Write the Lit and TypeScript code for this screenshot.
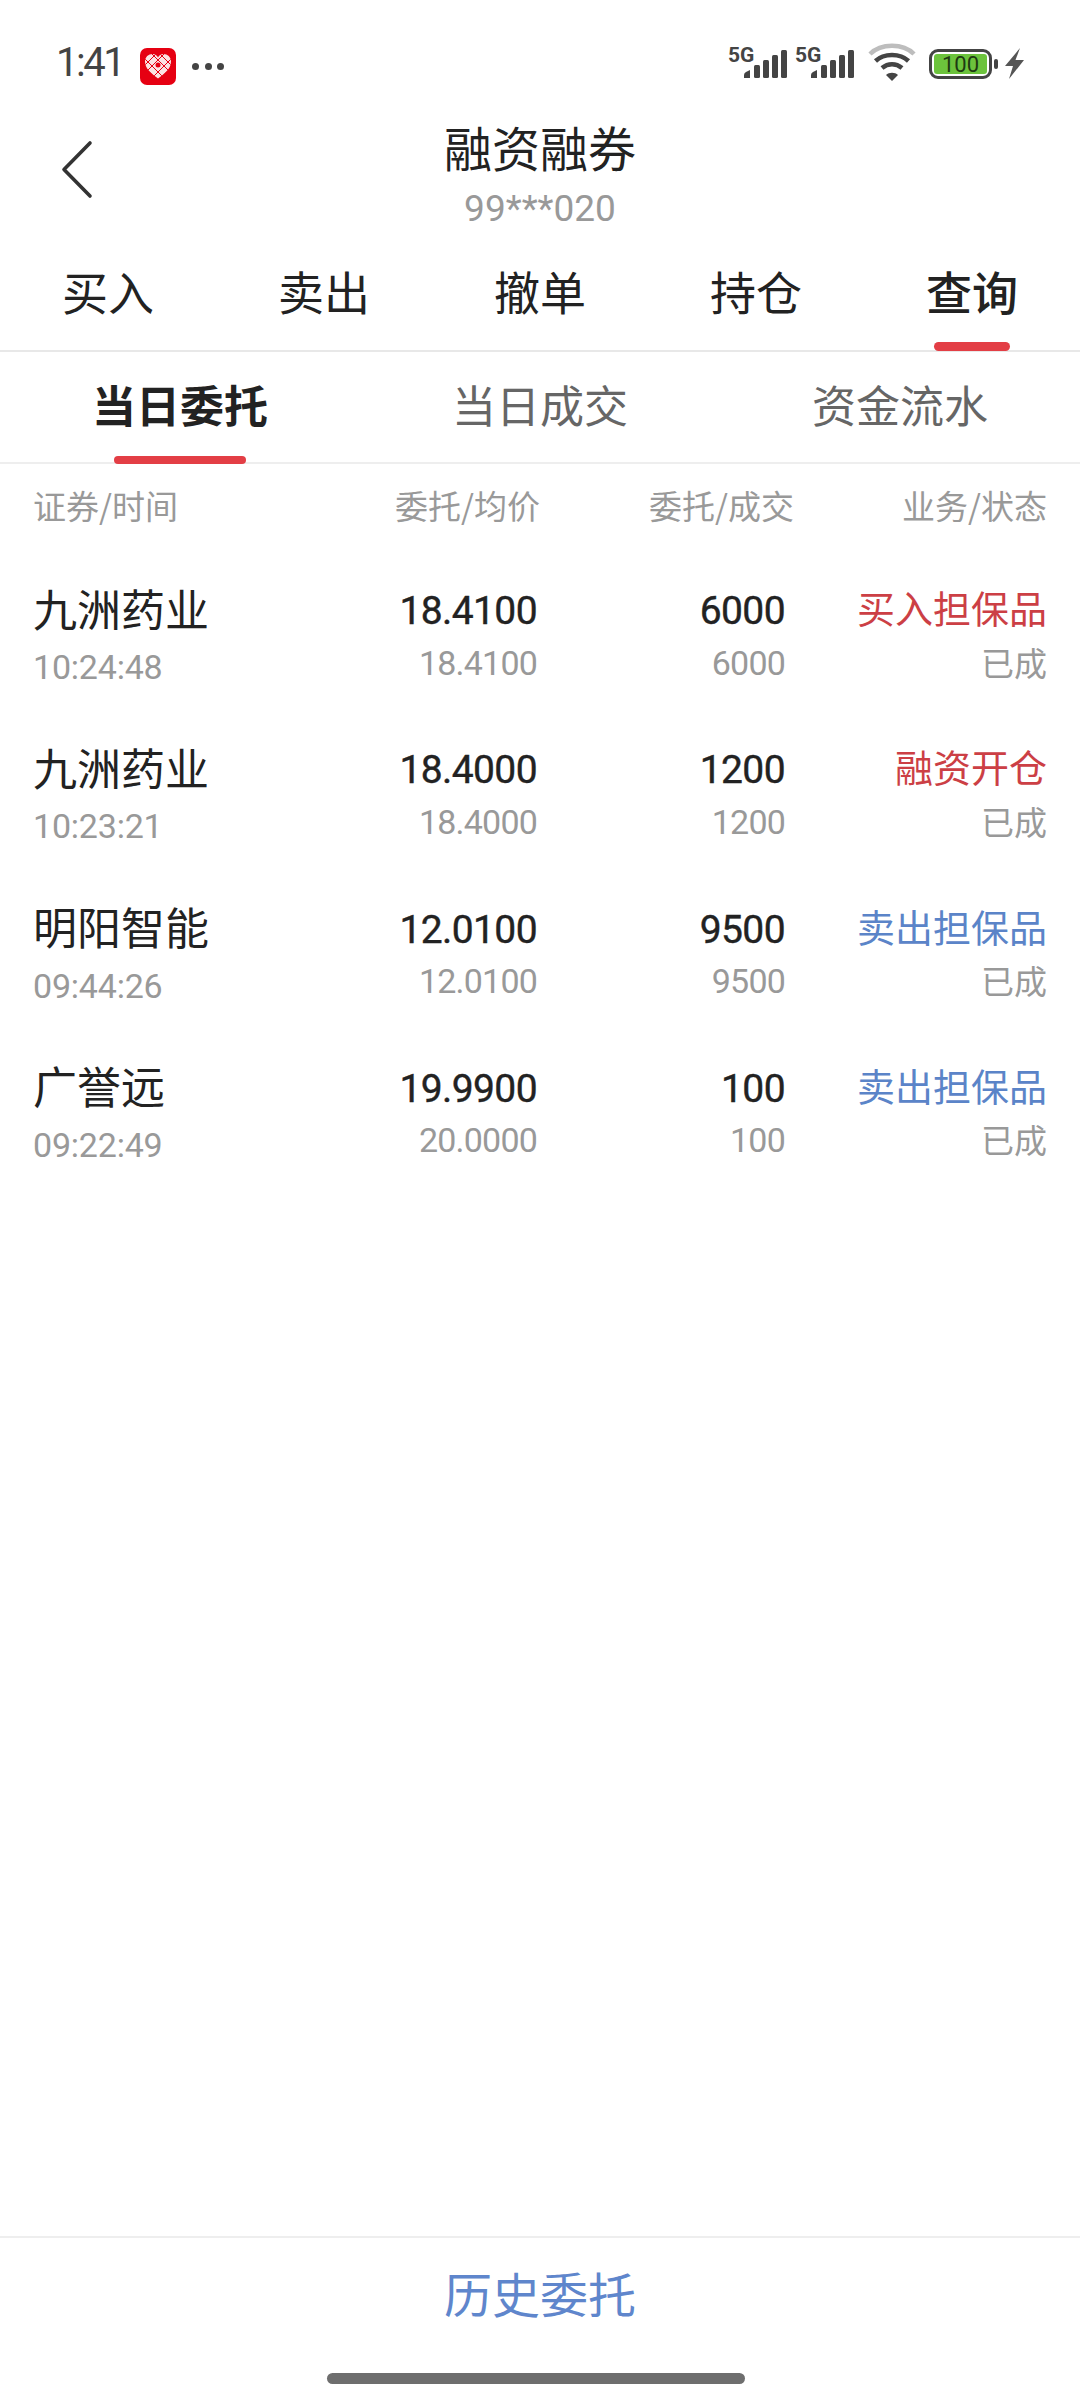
import { LitElement, html, css, svg } from "lit";
import { customElement } from "lit/decorators.js";

interface Order {
  name: string;
  time: string;
  price: string;
  avg: string;
  qty: string;
  filled: string;
  kind: string;
  tone: "buy" | "sell";
}

const ORDERS: Order[] = [
  { name: "九洲药业", time: "10:24:48", price: "18.4100", avg: "18.4100", qty: "6000", filled: "6000", kind: "买入担保品", tone: "buy" },
  { name: "九洲药业", time: "10:23:21", price: "18.4000", avg: "18.4000", qty: "1200", filled: "1200", kind: "融资开仓", tone: "buy" },
  { name: "明阳智能", time: "09:44:26", price: "12.0100", avg: "12.0100", qty: "9500", filled: "9500", kind: "卖出担保品", tone: "sell" },
  { name: "广誉远", time: "09:22:49", price: "19.9900", avg: "20.0000", qty: "100", filled: "100", kind: "卖出担保品", tone: "sell" },
];

const MAIN_TABS = ["买入", "卖出", "撤单", "持仓", "查询"];
const SUB_TABS = ["当日委托", "当日成交", "资金流水"];

// One cellular indicator: network label plus five rising bars.
const signal = (ox: number) => svg`
  <text x=${ox} y="22" class="net">5G</text>
  <path d="M${ox + 16} 38 v-3 q0 -2 2 -3 l4 -2 v8 z" />
  <rect x=${ox + 26} y="25" width="6" height="13" rx="1.5" />
  <rect x=${ox + 35} y="20" width="6" height="18" rx="1.5" />
  <rect x=${ox + 44} y="15" width="6" height="23" rx="1.5" />
  <rect x=${ox + 53} y="10" width="6" height="28" rx="1.5" />
`;

@customElement("app-root")
export class AppRoot extends LitElement {
  static styles = css`
    :host {
      display: block;
      width: 1080px;
      height: 2400px;
      background: #fff;
      font-family: "Noto Sans CJK SC", "Noto Sans", sans-serif;
      color: #222;
    }
    .page {
      height: 2400px;
      display: flex;
      flex-direction: column;
    }
    .status {
      height: 86px;
      flex: none;
      padding: 40px 48px 0 56px;
      box-sizing: border-box;
      display: flex;
      align-items: flex-start;
    }
    .status-left {
      display: flex;
      align-items: center;
      height: 46px;
    }
    .clock {
      font: 400 40px/46px Roboto, sans-serif;
      letter-spacing: -2.5px;
      color: #444;
      width: 66px;
    }
    .app-icon {
      width: 36px;
      height: 37px;
      margin: 6px 0 0 18px;
    }
    .dots {
      display: flex;
      gap: 5.5px;
      margin: 6px 0 0 16px;
    }
    .dots i {
      width: 7px;
      height: 7px;
      border-radius: 50%;
      background: #444;
    }
    .status-right {
      margin-left: auto;
      flex: none;
    }
    .net {
      font: 700 21px Roboto, sans-serif;
      fill: #444;
    }
    .nav {
      flex: none;
      height: 146px;
      position: relative;
      display: flex;
      flex-direction: column;
      align-items: center;
    }
    .back {
      position: absolute;
      left: 60px;
      top: 54px;
    }
    .title {
      font-size: 48px;
      line-height: 70px;
      margin-top: 25px;
      color: #222;
    }
    .account {
      font: 400 37px/46px Roboto, sans-serif;
      color: #999;
      margin-top: 4.5px;
    }
    .main-tabs {
      flex: none;
      height: 118px;
      display: grid;
      grid-template-columns: repeat(5, 1fr);
      border-bottom: 2px solid #e8e8e8;
    }
    .main-tab {
      position: relative;
      text-align: center;
      font-size: 46px;
      line-height: 64px;
      padding-top: 25.5px;
      color: #222;
    }
    .main-tab.on {
      font-weight: 500;
    }
    .main-tab.on::after {
      content: "";
      position: absolute;
      left: 50%;
      bottom: -1px;
      width: 76px;
      height: 9px;
      margin-left: -38px;
      border-radius: 5px;
      background: #e33e45;
    }
    .sub-tabs {
      flex: none;
      height: 110px;
      display: grid;
      grid-template-columns: repeat(3, 1fr);
      border-bottom: 2px solid #eee;
    }
    .sub-tab {
      position: relative;
      text-align: center;
      font-size: 44px;
      line-height: 64px;
      padding-top: 20px;
      color: #666;
    }
    .sub-tab.on {
      font-weight: 700;
      color: #222;
    }
    .sub-tab.on::after {
      content: "";
      position: absolute;
      left: 50%;
      bottom: -2px;
      width: 132px;
      height: 8px;
      margin-left: -66px;
      border-radius: 4px;
      background: #e33e45;
    }
    .head,
    .row {
      display: grid;
      padding: 0 33px 0 34px;
    }
    .head {
      flex: none;
      grid-template-columns: 200px 306px 254px 253px;
      height: 81px;
      align-items: center;
      font-size: 33px;
      color: #999;
    }
    .head span:first-child {
      margin-left: -1px;
    }
    .head span:nth-child(n + 2) {
      text-align: right;
    }
    .rows {
      flex: 1;
      padding-top: 36px;
    }
    .row {
      grid-template-columns: 200px 303px 248px 262px;
      height: 159.3px;
    }
    .col-r {
      text-align: right;
    }
    .first {
      margin-left: -1px;
    }
    .name {
      font-size: 44px;
      line-height: 60px;
      margin-top: -3.5px;
      color: #222;
    }
    .time {
      font: 400 34px/46px Roboto, sans-serif;
      letter-spacing: -0.2px;
      color: #999;
      margin-top: 6.5px;
    }
    .value {
      font: 400 39px/60px Roboto, sans-serif;
      letter-spacing: -0.6px;
      -webkit-text-stroke: 0.4px #222;
      color: #222;
    }
    .minor {
      font: 400 34px/46px Roboto, sans-serif;
      letter-spacing: -0.8px;
      color: #999;
      margin-top: -1.5px;
    }
    .kind {
      font-size: 38px;
      line-height: 60px;
      margin-top: -4px;
    }
    .kind.buy {
      color: #cc3f45;
    }
    .kind.sell {
      color: #5b84c8;
    }
    .state {
      font-size: 33px;
      line-height: 46px;
      color: #999;
      margin-top: 1.5px;
    }
    .foot {
      flex: none;
      height: 164px;
      border-top: 2px solid #eee;
      display: flex;
      flex-direction: column;
      align-items: center;
      box-sizing: border-box;
    }
    .history {
      font-size: 48px;
      line-height: 70px;
      color: #5f86cc;
      margin-top: 19px;
    }
    .home {
      width: 418px;
      height: 11px;
      border-radius: 6px;
      background: #6e6e6e;
      margin: 46px 9px 0 0;
    }
  `;

  private renderRow(o: Order) {
    return html`
      <div class="row">
        <div class="first">
          <div class="name">${o.name}</div>
          <div class="time">${o.time}</div>
        </div>
        <div class="col-r">
          <div class="value">${o.price}</div>
          <div class="minor">${o.avg}</div>
        </div>
        <div class="col-r">
          <div class="value">${o.qty}</div>
          <div class="minor">${o.filled}</div>
        </div>
        <div class="col-r">
          <div class="kind ${o.tone}">${o.kind}</div>
          <div class="state">已成</div>
        </div>
      </div>
    `;
  }

  render() {
    return html`
      <div class="page">
        <div class="status">
          <div class="status-left">
            <span class="clock">1:41</span>
            <svg class="app-icon" viewBox="0 0 36 37">
              <defs>
                <clipPath id="heart">
                  <path d="M18 30.500 C12 26 5 21 5 13.500 C5 9 8.500 6 12.500 6 C15 6 17 7.500 18 9.500 C19 7.500 21 6 23.500 6 C27.500 6 31 9 31 13.500 C31 21 24 26 18 30.500 Z" />
                </clipPath>
              </defs>
              <rect width="36" height="37" rx="7" fill="#e60012" />
              <g clip-path="url(#heart)">
                <rect width="36" height="37" fill="#fbe3e3" />
                <g stroke="#e60012" stroke-width="1" fill="none">
                  <path d="M0 6 L30 36 M0 14 L22 36 M6 0 L36 30 M14 0 L36 22 M36 6 L6 36 M36 14 L14 36 M30 0 L0 30 M22 0 L0 22" />
                </g>
                <circle cx="18" cy="17" r="2.500" fill="#e60012" />
              </g>
            </svg>
            <span class="dots"><i></i><i></i><i></i></span>
          </div>
          <svg class="status-right" width="304" height="46" viewBox="0 0 304 46">
            <g fill="#444">
              ${signal(0)}
              ${signal(67)}
            </g>
            <path d="M142 14 C153 3 175 3 186 14" fill="none" stroke="#bdbdbd" stroke-width="4.500" />
            <path d="M147.500 21 C156 13 172 13 180.500 21" fill="none" stroke="#444" stroke-width="4.500" />
            <path d="M154 28 C160 23 168 23 174 28" fill="none" stroke="#444" stroke-width="4.500" />
            <path d="M164 41 L158 35 C161 32 167 32 170 35 Z" fill="#444" />
            <rect x="202.500" y="10.500" width="60" height="27" rx="7.500" fill="none" stroke="#444" stroke-width="3" />
            <rect x="206" y="14" width="53" height="20" rx="3" fill="#6cc33c" />
            <text x="232.500" y="31.500" text-anchor="middle" font-family="Roboto, sans-serif" font-size="22" fill="#1e3a12">100</text>
            <rect x="266" y="19" width="4" height="10" rx="2" fill="#444" />
            <path d="M292 8 L277 26 L285 26 L281 39 L296 20 L287.500 20 Z" fill="#555" />
          </svg>
        </div>
        <div class="nav">
          <svg class="back" width="34" height="62" viewBox="0 0 34 62">
            <path d="M30 3 L4 29.500 L30 56" fill="none" stroke="#333" stroke-width="3.600" stroke-linejoin="round" stroke-linecap="round" />
          </svg>
          <div class="title">融资融券</div>
          <div class="account">99***020</div>
        </div>
        <div class="main-tabs">
          ${MAIN_TABS.map((t, i) => html`<div class="main-tab ${i === 4 ? "on" : ""}">${t}</div>`)}
        </div>
        <div class="sub-tabs">
          ${SUB_TABS.map((t, i) => html`<div class="sub-tab ${i === 0 ? "on" : ""}">${t}</div>`)}
        </div>
        <div class="head">
          <span>证券/时间</span><span>委托/均价</span><span>委托/成交</span><span>业务/状态</span>
        </div>
        <div class="rows">${ORDERS.map((o) => this.renderRow(o))}</div>
        <div class="foot">
          <div class="history">历史委托</div>
          <div class="home"></div>
        </div>
      </div>
    `;
  }
}
